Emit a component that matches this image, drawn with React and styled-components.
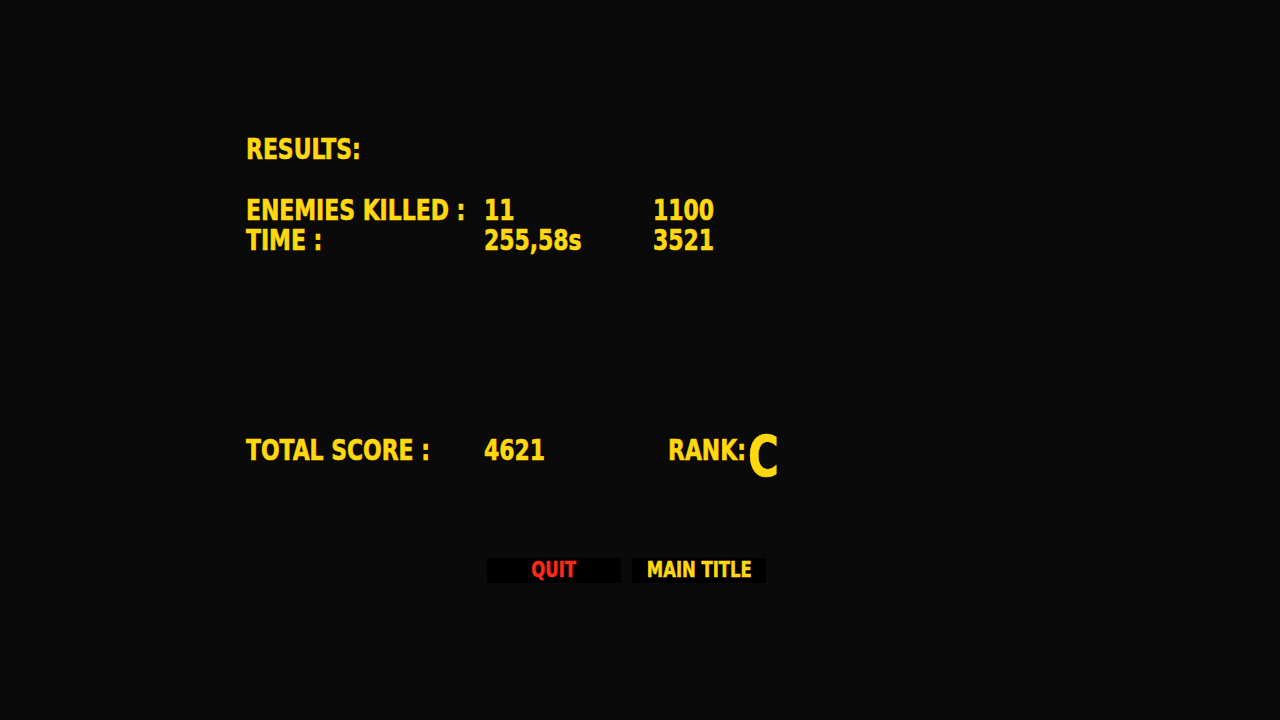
import React from "react";
import styled, { createGlobalStyle } from "styled-components";

const Global = createGlobalStyle`
  html, body { margin: 0; padding: 0; background: #0a0a0a; }
  body { width: 1280px; height: 720px; overflow: hidden; }
`;

const Screen = styled.div`
  width: 1280px;
  height: 720px;
  box-sizing: border-box;
  background: #0a0a0a;
  padding: 134px 0 0 246px;
  font-family: "DejaVu Sans Condensed", "Liberation Sans Narrow", "Roboto", sans-serif;
  font-weight: 700;
  color: #ffd80f;
  -webkit-text-stroke: 0.6px currentColor;
  display: flex;
  flex-direction: column;
`;

const Text = styled.span`
  display: inline-block;
  white-space: nowrap;
  transform: scaleX(${(p) => p.$sx || 0.87});
  transform-origin: left center;
`;

const Title = styled.div`
  font-size: 28px;
  line-height: 32px;
`;

const StatGrid = styled.div`
  margin-top: 30px;
  display: grid;
  grid-template-columns: 238px 169px auto;
  grid-auto-rows: 30px;
  font-size: 28px;
  line-height: 30px;
`;

const TotalRow = styled.div`
  margin-top: 169px;
  display: flex;
  align-items: center;
  height: 50px;
  font-size: 28px;
`;

const Cell = styled.div`
  width: ${(p) => p.$w || "auto"};
  flex: none;
`;

const RankLetter = styled.div`
  align-self: flex-start;
  font-size: 57px;
  line-height: 50px;
  margin-left: -1px;
  margin-top: 7px;
  margin-bottom: -7px;
`;

const Buttons = styled.div`
  margin-top: 83px;
  margin-left: 241px;
  display: flex;
  gap: 11px;
`;

const Button = styled.button`
  width: 134px;
  height: 25px;
  border: none;
  background: #000;
  padding: 0;
  font-family: inherit;
  font-weight: 700;
  font-size: 21px;
  line-height: 25px;
  color: ${(p) => (p.$danger ? "#ff2a17" : "#ffd80f")};
  -webkit-text-stroke: 0.5px currentColor;
  cursor: pointer;
  display: flex;
  justify-content: center;
  align-items: center;
`;

const ButtonLabel = styled.span`
  display: inline-block;
  white-space: nowrap;
  transform: scaleX(0.87);
`;

export default function App() {
  return (
    <>
      <Global />
      <Screen>
        <Title><Text>RESULTS:</Text></Title>
        <StatGrid>
          <div><Text>ENEMIES KILLED :</Text></div>
          <div><Text>11</Text></div>
          <div><Text>1100</Text></div>
          <div><Text>TIME :</Text></div>
          <div><Text>255,58s</Text></div>
          <div><Text>3521</Text></div>
        </StatGrid>
        <TotalRow>
          <Cell $w="238px"><Text>TOTAL SCORE :</Text></Cell>
          <Cell $w="184px"><Text>4621</Text></Cell>
          <Cell $w="81px"><Text>RANK:</Text></Cell>
          <RankLetter><Text $sx={0.82}>C</Text></RankLetter>
        </TotalRow>
        <Buttons>
          <Button $danger><ButtonLabel>QUIT</ButtonLabel></Button>
          <Button><ButtonLabel>MAIN TITLE</ButtonLabel></Button>
        </Buttons>
      </Screen>
    </>
  );
}
